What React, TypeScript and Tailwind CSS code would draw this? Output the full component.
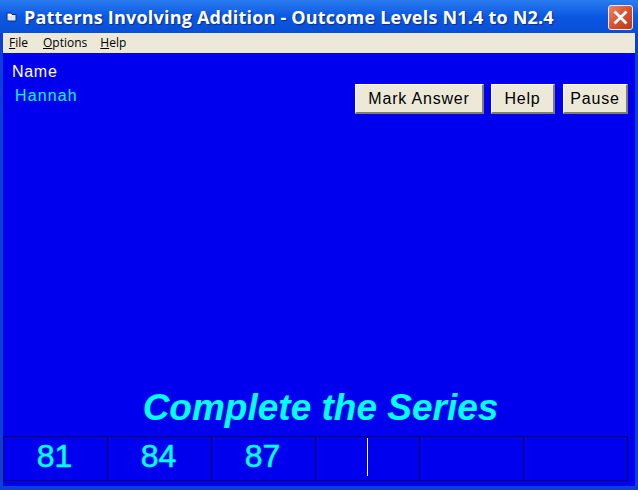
import React from 'react'

const sans = "font-['Liberation_Sans',Arial,sans-serif]"

function CloseIcon() {
  return (
    <div className="w-[25px] h-[25px] rounded-[3px] border border-[#f4e8e4] bg-gradient-to-br from-[#e9866b] via-[#d9512c] to-[#b83a1c] flex items-center justify-center">
      <svg width="17" height="17" viewBox="0 0 17 17">
        <path d="M3.5 3.5 L13.5 13.5 M13.5 3.5 L3.5 13.5" stroke="#fff" strokeWidth="2.8" strokeLinecap="square" />
      </svg>
    </div>
  )
}

function FolderIcon() {
  return (
    <svg width="11" height="12" viewBox="0 0 11 12">
      <path d="M1 2 H5 L6 3.5 H10 V10 H2.5 L1 8.5 Z" fill="#dfe3ea" stroke="#0c2f86" strokeWidth="1" />
      <rect x="2" y="3" width="3.5" height="2" fill="#fff" />
    </svg>
  )
}

function WinButton({ label, className }: { label: string; className: string }) {
  return (
    <button
      className={`h-[30px] bg-[#ece9d8] text-black text-[16px] tracking-[0.8px] border-t border-l border-t-white border-l-white border-r-2 border-b-2 border-r-[#7f7d70] border-b-[#7f7d70] flex items-center justify-center ${sans} ${className}`}
    >
      {label}
    </button>
  )
}

const cells = ['81', '84', '87', '', '', '']

export default function App() {
  return (
    <div className={`w-[638px] h-[490px] overflow-hidden flex flex-col bg-[#0a3fd8] ${sans}`}>
      {/* Title bar */}
      <div className="h-[33px] shrink-0 flex items-center pt-[1px] pl-[6px] pr-[5px] bg-gradient-to-b from-[#2a7cf0] via-[#0a58e2] to-[#0a4fd6]">
        <FolderIcon />
        <span className="ml-[7px] flex-1 text-white font-bold text-[18px] tracking-[0.2px] font-['Open_Sans',sans-serif] [text-shadow:1px_1px_1px_#0a2a90] whitespace-nowrap">
          Patterns Involving Addition - Outcome Levels N1.4 to N2.4
        </span>
        <CloseIcon />
      </div>

      <div className="flex-1 flex flex-col px-[3px] pb-[4px] min-h-0">
        {/* Menu */}
        <div className="h-[20px] shrink-0 bg-[#ece9d8] flex items-center gap-[13px] pl-[6px] text-[12px] text-black font-['Open_Sans',sans-serif]">
          <span className="w-[21px]"><u>F</u>ile</span>
          <span><u>O</u>ptions</span>
          <span><u>H</u>elp</span>
        </div>

        {/* Client area */}
        <div className="flex-1 bg-[#0000ee] flex flex-col min-h-0">
          <div className="flex justify-between pl-[9px] pr-[7px] pt-[10px]">
            <div className="flex flex-col text-[16px] tracking-[0.7px] leading-[18px]">
              <span className="text-white">Name</span>
              <span className="text-[#00ffff] mt-[6px] ml-[3px] tracking-[1.1px]">Hannah</span>
            </div>
            <div className="flex gap-[7px] mt-[21px]">
              <WinButton label="Mark Answer" className="w-[129px]" />
              <WinButton label="Help" className="w-[64px] mr-[1px]" />
              <WinButton label="Pause" className="w-[65px]" />
            </div>
          </div>

          <div className="mt-auto text-center text-[#00ffff] font-bold italic text-[37px] leading-[42px] pl-[3px] mb-[7px]">
            Complete the Series
          </div>

          <div className="flex h-[45px] w-[625px] border border-[#00005f] mb-[5px]">
            {cells.map((v, i) => (
              <div
                key={i}
                className={`relative flex items-center justify-center text-[#00ffff] text-[32px] [-webkit-text-stroke:0.5px_#00ffff] pb-[5px] pr-[2px] ${i < 5 ? 'w-[104px] shrink-0 border-r border-[#00005f]' : 'flex-1'}`}
              >
                {v}
                {i === 3 && <div className="absolute left-[51px] top-[1px] bottom-[4px] w-px bg-white" />}
              </div>
            ))}
          </div>
        </div>
      </div>
    </div>
  )
}
